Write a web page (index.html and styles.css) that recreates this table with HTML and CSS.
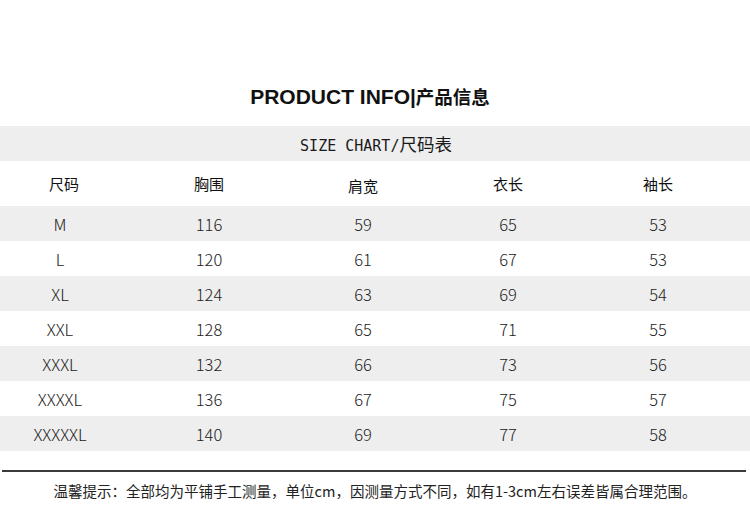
FILE: index.html
```html
<!DOCTYPE html>
<html lang="zh-CN">
<head>
<meta charset="utf-8">
<title>PRODUCT INFO</title>
<link rel="stylesheet" href="styles.css">
</head>
<body>
<div class="page">
  <h1 class="title">PRODUCT INFO|<span class="title-cn">产品信息</span></h1>
  <div class="band"><span class="band-en">SIZE CHART/</span>尺码表</div>
  <div class="grid head">
    <div>尺码</div><div>胸围</div><div class="low">肩宽</div><div>衣长</div><div>袖长</div>
  </div>
  <div class="grid data alt"><div>M</div><div>116</div><div>59</div><div>65</div><div>53</div></div>
  <div class="grid data"><div>L</div><div>120</div><div>61</div><div>67</div><div>53</div></div>
  <div class="grid data alt"><div>XL</div><div>124</div><div>63</div><div>69</div><div>54</div></div>
  <div class="grid data"><div>XXL</div><div>128</div><div>65</div><div>71</div><div>55</div></div>
  <div class="grid data alt"><div>XXXL</div><div>132</div><div>66</div><div>73</div><div>56</div></div>
  <div class="grid data"><div>XXXXL</div><div>136</div><div>67</div><div>75</div><div>57</div></div>
  <div class="grid data alt"><div>XXXXXL</div><div>140</div><div>69</div><div>77</div><div>58</div></div>
  <div class="rule"></div>
  <p class="note">温馨提示：全部均为平铺手工测量，单位cm，因测量方式不同，如有1-3cm左右误差皆属合理范围。</p>
</div>
</body>
</html>
```

FILE: styles.css
```css
html, body {
  margin: 0;
  padding: 0;
  background: #ffffff;
}

.page {
  width: 750px;
  height: 506px;
  overflow: hidden;
  font-family: "Noto Sans CJK SC", "Noto Sans", sans-serif;
  color: #1a1a1a;
}

.title {
  margin: 0;
  padding-top: 84px;
  padding-right: 10px;
  height: 24px;
  margin-bottom: 18px;
  line-height: 24px;
  text-align: center;
  font-family: "Liberation Sans", "Noto Sans CJK SC", sans-serif;
  font-size: 21px;
  font-weight: 700;
  color: #111;
}

.title-cn {
  font-family: "Noto Sans CJK SC", sans-serif;
  font-size: 18.5px;
  font-weight: 700;
}

.band {
  height: 35px;
  line-height: 35px;
  background: #eeeeee;
  text-align: center;
  font-size: 17.5px;
  color: #1a1a1a;
  padding-left: 2px;
}

.band-en {
  font-family: "DejaVu Sans Mono", monospace;
  font-size: 15px;
}

.grid {
  display: grid;
  grid-template-columns: 120px 178px 130px 160px 140px;
  align-items: center;
  text-align: center;
}

.head {
  height: 45px;
  font-size: 15px;
  color: #111;
}

.head > div:first-child {
  padding-left: 8px;
}

.head .low {
  padding-top: 4px;
}

.data {
  height: 35px;
  font-size: 16.5px;
  font-weight: 300;
  color: #222;
}

.alt {
  background: #eeeeee;
}

.rule {
  margin: 19px 4px 0 2px;
  height: 2px;
  background: #3a3a3a;
}

.note {
  margin: 9px 0 0;
  text-align: center;
  font-size: 14.5px;
  line-height: 20px;
  color: #222;
}
```
